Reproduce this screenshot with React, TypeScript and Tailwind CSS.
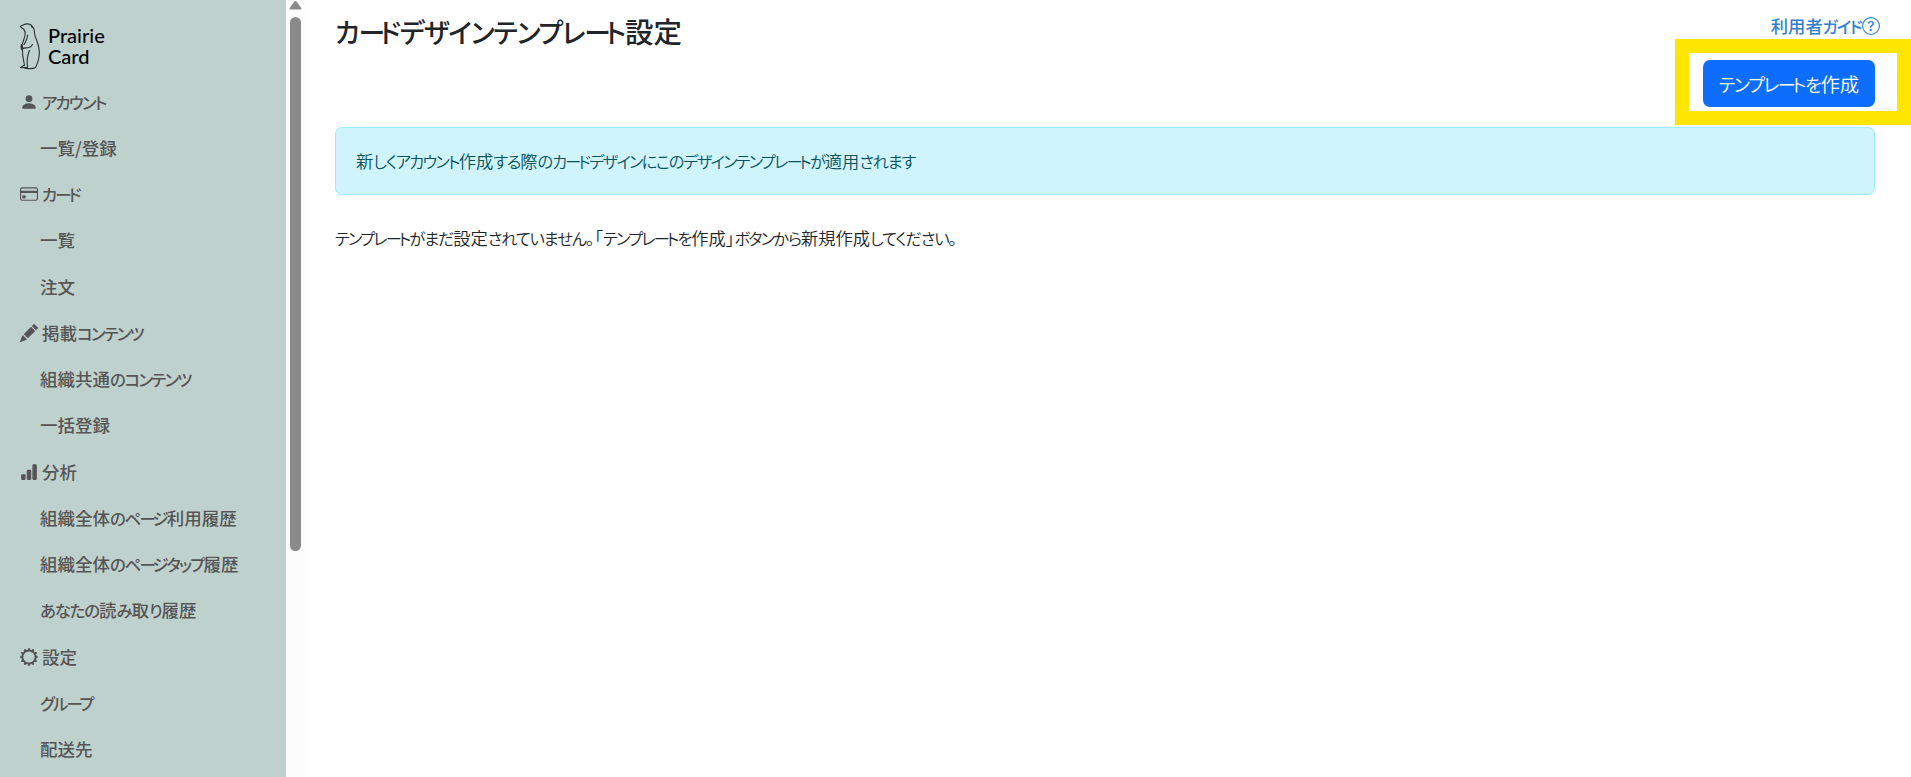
import {
  BsBarChartFill,
  BsCreditCard,
  BsGearWide,
  BsPencilFill,
  BsPersonFill,
  BsQuestionCircle,
} from "react-icons/bs";
import type { IconType } from "react-icons";

type Section = {
  title: string;
  icon: IconType;
  items: Array<string>;
};

const sections: Array<Section> = [
  { title: "アカウント", icon: BsPersonFill, items: ["一覧/登録"] },
  { title: "カード", icon: BsCreditCard, items: ["一覧", "注文"] },
  {
    title: "掲載コンテンツ",
    icon: BsPencilFill,
    items: ["組織共通のコンテンツ", "一括登録"],
  },
  {
    title: "分析",
    icon: BsBarChartFill,
    items: [
      "組織全体のページ利用履歴",
      "組織全体のページタップ履歴",
      "あなたの読み取り履歴",
    ],
  },
  { title: "設定", icon: BsGearWide, items: ["グループ", "配送先"] },
];

type JaTextProps = {
  text: string;
  katakana?: string;
};

// Kana runs are set smaller and tighter than kanji, the long vowel mark tighter still
const JaText = ({ text, katakana = "tracking-[-0.11em]" }: JaTextProps) => (
  <span>
    {text.split(/([\u3040-\u309f]+|[\u30a0-\u30fb]+|ー)/).map((part, index) => {
      if (index % 2 === 0) return part;
      let tracking = katakana;
      if (part === "ー") tracking = "tracking-[-0.2em]";
      if (part < "\u30a0") tracking = "tracking-[-0.07em]";
      return (
        <span key={index} className={`text-[0.94em] ${tracking}`}>
          {part}
        </span>
      );
    })}
  </span>
);

const Logo = () => (
  <div className="flex h-[78.5px] shrink-0 items-start gap-2 pl-[19px] pt-[23px]">
    <svg
      width="21"
      height="47"
      viewBox="0 0 21 47"
      fill="none"
      stroke="#2b3331"
      strokeWidth="1.1"
      strokeLinecap="round"
      strokeLinejoin="round"
    >
      <path d="M1.500 3.500C2 2.500 3.500 2.700 4.500 1.800C6.500 .8 10 .8 12 2C14.500 4 15.500 7 15.500 10C15.800 15 20 20 20.300 28C20.500 34 19 40 16.500 44.500C14 46 11 45.800 8 45.500" />
      <path d="M1.500 3.500C2 5 3.500 5.200 4.500 6C6.500 8 6.500 10 6 12C5.500 15 4.500 17 3.800 20C2.300 22 1.500 24 2.500 26C4.500 27 3 30 4 34C4.500 37 4.800 39 5.500 42" />
      <path d="M5.500 42C4 43.500 2 43.500 1.500 44.500C4 45.200 6 44.200 8 44.200C9.500 45 8 45.500 6 45.500" />
      <path d="M8.500 12C8.500 16 6.500 19 5 21.500M3.500 25.500C6 24.500 8 25.300 10 24.500C12 24 13 22.500 13.500 21.500M10.500 27.500C8.500 32 7.500 37 8.500 43.500M12.300 3.300L13.500 4.500" />
      <path d="M2.800 22L3.300 26" strokeWidth="2" />
    </svg>
    <div className="flex flex-col pt-[2px] font-['Lato'] text-[20px] leading-[20.5px] text-black">
      <span>Prairie</span>
      <span>Card</span>
    </div>
  </div>
);

const Sidebar = () => (
  <aside className="flex w-[286px] shrink-0 flex-col overflow-hidden bg-[#bfd1cd] text-[17.5px] font-medium text-[#555]">
    <Logo />
    <nav>
      {sections.map(({ title, icon: Icon, items }) => (
        <div key={title}>
          <div className="flex h-[46.25px] items-center gap-1 pl-5">
            <Icon className="size-[18px] shrink-0" />
            <JaText text={title} />
          </div>
          {items.map((item) => (
            <div key={item} className="flex h-[46.25px] items-center pl-10">
              <JaText text={item} />
            </div>
          ))}
        </div>
      ))}
    </nav>
  </aside>
);

const Scrollbar = () => (
  <div className="flex w-[19px] shrink-0 flex-col items-center bg-[#fcfcfc] pr-px">
    <svg width="13" height="17" viewBox="0 0 13 17" fill="#8b8b8b">
      <path d="M5.500 1.500Q6.500 .5 7.500 1.500L12.300 8Q12.800 9.500 11.500 9.500H1.500Q.2 9.500 .7 8Z" />
    </svg>
    <div className="h-[534px] w-[11px] rounded-full bg-[#8b8b8b]" />
  </div>
);

export default function App() {
  return (
    <div className="flex h-[777px] w-[1911px] overflow-hidden bg-white font-['Noto_Sans_CJK_JP',sans-serif] text-[#212529] [font-feature-settings:'palt']">
      <Sidebar />
      <Scrollbar />

      <main className="min-w-0 flex-1 pl-[30px]">
        <div className="flex h-[127px] justify-between">
          <h1 className="pt-[11px] text-[28.5px] font-medium leading-[40px]">
            <JaText
              text="カードデザインテンプレート設定"
              katakana="tracking-[-0.042em]"
            />
          </h1>

          <div className="flex flex-col items-end">
            <a
              href="#"
              className="mr-[31px] flex h-[39px] items-center gap-px pt-[13px] text-[17.3px] font-medium text-[#3182ce]"
            >
              <JaText text="利用者ガイド" katakana="tracking-[-0.09em]" />
              <BsQuestionCircle className="size-[18px]" />
            </a>
            <div className="flex h-[86px] w-[236px] items-center justify-end border-[14px] border-[#ffe600] pr-[22px] pt-[3px]">
              <button className="h-[47px] w-[172px] rounded-[7px] bg-[#0d6efd] text-[19.4px] font-[350] text-white">
                <JaText
                  text="テンプレートを作成"
                  katakana="tracking-[-0.08em]"
                />
              </button>
            </div>
          </div>
        </div>

        <div className="mr-9 flex h-[68px] items-center rounded-[7px] border border-[#9eeaf9] bg-[#cff4fc] px-5 text-[17.3px] font-[350] text-[#055160]">
          <JaText text="新しくアカウント作成する際のカードデザインにこのデザインテンプレートが適用されます" />
        </div>

        <p className="mt-[30px] text-[17.3px] font-[350] leading-[26px]">
          <JaText text="テンプレートがまだ設定されていません。「テンプレートを作成」ボタンから新規作成してください。" />
        </p>
      </main>
    </div>
  );
}
